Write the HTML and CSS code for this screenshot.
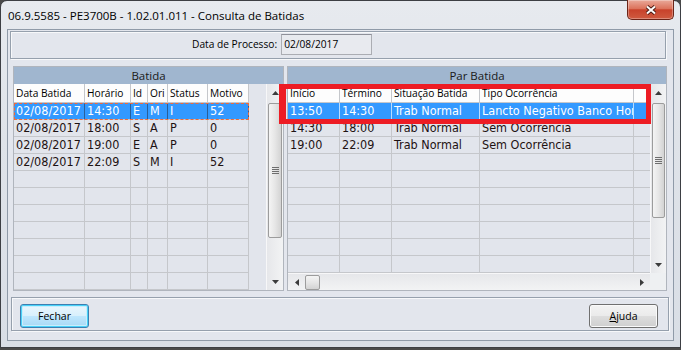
FILE: index.html
```html
<!DOCTYPE html>
<html lang="pt">
<head>
    <meta charset="UTF-8">
    <title>Consulta de Batidas</title>
    <link rel="stylesheet" href="styles.css">
</head>
<body>
    <div class="window">
        <div class="titlebar">
            <span class="title">06.9.5585 - PE3700B - 1.02.01.011 - Consulta de Batidas</span>
            <div class="close-btn">
                <svg width="12" height="10" viewBox="0 0 12 10">
                    <path d="M2 1.5 L10 8.5 M10 1.5 L2 8.5" stroke="#4a1a12" stroke-width="3.8"/>
                    <path d="M2 1.5 L10 8.5 M10 1.5 L2 8.5" stroke="#fff" stroke-width="2"/>
                </svg>
            </div>
        </div>

        <div class="client">
            <div class="panel top-panel">
                <span class="field-label">Data de Processo:</span>
                <div class="textbox">02/08/2017</div>
            </div>

            <div class="grids">
                <!-- batidas -->
                <div class="grid grid-left">
                    <div class="grid-caption">Batida</div>
                    <div class="grid-body">
                        <div class="cells cells-left">
                            <div class="row head">
                                <span class="c">Data Batida</span><span class="c">Horário</span><span class="c">Id</span><span class="c">Ori</span><span class="c">Status</span><span class="c">Motivo</span>
                            </div>
                            <div class="row selected">
                                <span class="c">02/08/2017</span><span class="c">14:30</span><span class="c">E</span><span class="c">M</span><span class="c">I</span><span class="c">52</span>
                            </div>
                            <div class="row">
                                <span class="c">02/08/2017</span><span class="c">18:00</span><span class="c">S</span><span class="c">A</span><span class="c">P</span><span class="c">0</span>
                            </div>
                            <div class="row">
                                <span class="c">02/08/2017</span><span class="c">19:00</span><span class="c">E</span><span class="c">A</span><span class="c">P</span><span class="c">0</span>
                            </div>
                            <div class="row">
                                <span class="c">02/08/2017</span><span class="c">22:09</span><span class="c">S</span><span class="c">M</span><span class="c">I</span><span class="c">52</span>
                            </div>
                            <div class="row"><span class="c"></span><span class="c"></span><span class="c"></span><span class="c"></span><span class="c"></span><span class="c"></span></div>
                            <div class="row"><span class="c"></span><span class="c"></span><span class="c"></span><span class="c"></span><span class="c"></span><span class="c"></span></div>
                            <div class="row"><span class="c"></span><span class="c"></span><span class="c"></span><span class="c"></span><span class="c"></span><span class="c"></span></div>
                            <div class="row"><span class="c"></span><span class="c"></span><span class="c"></span><span class="c"></span><span class="c"></span><span class="c"></span></div>
                            <div class="row"><span class="c"></span><span class="c"></span><span class="c"></span><span class="c"></span><span class="c"></span><span class="c"></span></div>
                            <div class="row"><span class="c"></span><span class="c"></span><span class="c"></span><span class="c"></span><span class="c"></span><span class="c"></span></div>
                            <div class="row"><span class="c"></span><span class="c"></span><span class="c"></span><span class="c"></span><span class="c"></span><span class="c"></span></div>
                        </div>
                        <div class="vscroll">
                            <div class="sb-arrow"><svg width="7" height="4" viewBox="0 0 7 4"><path d="M0 4 L3.5 0 L7 4 Z" fill="#3c3c3c"/></svg></div>
                            <div class="thumb-v thumb-left">
                                <svg width="7" height="8" viewBox="0 0 7 8"><path d="M0 0.5 H7 M0 2.5 H7 M0 4.5 H7 M0 6.5 H7" stroke="#6e6e6e" stroke-width="1"/></svg>
                            </div>
                            <div class="sb-arrow bottom"><svg width="7" height="4" viewBox="0 0 7 4"><path d="M0 0 L7 0 L3.5 4 Z" fill="#3c3c3c"/></svg></div>
                        </div>
                    </div>
                </div>

                <!-- pares -->
                <div class="grid grid-right">
                    <div class="grid-caption">Par Batida</div>
                    <div class="grid-body">
                        <div class="grid-main">
                            <div class="cells cells-right">
                                <div class="row head">
                                    <span class="c">Início</span><span class="c">Término</span><span class="c">Situação Batida</span><span class="c">Tipo Ocorrência</span><span class="c fill"></span>
                                </div>
                                <div class="row selected">
                                    <span class="c">13:50</span><span class="c">14:30</span><span class="c">Trab Normal</span><span class="c">Lancto Negativo Banco Horas</span><span class="c fill"></span>
                                </div>
                                <div class="row">
                                    <span class="c">14:30</span><span class="c">18:00</span><span class="c">Trab Normal</span><span class="c">Sem Ocorrência</span><span class="c fill"></span>
                                </div>
                                <div class="row">
                                    <span class="c">19:00</span><span class="c">22:09</span><span class="c">Trab Normal</span><span class="c">Sem Ocorrência</span><span class="c fill"></span>
                                </div>
                                <div class="row"><span class="c"></span><span class="c"></span><span class="c"></span><span class="c"></span><span class="c fill"></span></div>
                                <div class="row"><span class="c"></span><span class="c"></span><span class="c"></span><span class="c"></span><span class="c fill"></span></div>
                                <div class="row"><span class="c"></span><span class="c"></span><span class="c"></span><span class="c"></span><span class="c fill"></span></div>
                                <div class="row"><span class="c"></span><span class="c"></span><span class="c"></span><span class="c"></span><span class="c fill"></span></div>
                                <div class="row"><span class="c"></span><span class="c"></span><span class="c"></span><span class="c"></span><span class="c fill"></span></div>
                                <div class="row"><span class="c"></span><span class="c"></span><span class="c"></span><span class="c"></span><span class="c fill"></span></div>
                                <div class="row"><span class="c"></span><span class="c"></span><span class="c"></span><span class="c"></span><span class="c fill"></span></div>
                            </div>
                            <div class="hscroll">
                                <div class="sb-arrow-h"><svg width="4" height="7" viewBox="0 0 4 7"><path d="M4 0 L0 3.5 L4 7 Z" fill="#3c3c3c"/></svg></div>
                                <div class="thumb-h"></div>
                                <div class="sb-arrow-h end"><svg width="4" height="7" viewBox="0 0 4 7"><path d="M0 0 L4 3.5 L0 7 Z" fill="#3c3c3c"/></svg></div>
                            </div>
                        </div>
                        <div class="vcol">
                            <div class="vscroll narrow">
                                <div class="sb-arrow"><svg width="7" height="4" viewBox="0 0 7 4"><path d="M0 4 L3.5 0 L7 4 Z" fill="#3c3c3c"/></svg></div>
                                <div class="thumb-v thumb-right">
                                    <svg width="7" height="8" viewBox="0 0 7 8"><path d="M0 0.5 H7 M0 2.5 H7 M0 4.5 H7 M0 6.5 H7" stroke="#6e6e6e" stroke-width="1"/></svg>
                                </div>
                                <div class="sb-arrow bottom"><svg width="7" height="4" viewBox="0 0 7 4"><path d="M0 0 L7 0 L3.5 4 Z" fill="#3c3c3c"/></svg></div>
                            </div>
                            <div class="corner"></div>
                        </div>
                    </div>
                    <!-- marcação vermelha sobre a linha selecionada -->
                    <div class="highlight"></div>
                </div>
            </div>

            <div class="panel bottom-panel">
                <button class="btn btn-default">Fechar</button>
                <button class="btn"><u>A</u>juda</button>
            </div>
        </div>
    </div>
</body>
</html>
```

FILE: styles.css
```css
* {
    box-sizing: border-box;
}
body {
    margin: 0;
    background: #4a4a4a;
    font-family: "Open Sans", "DejaVu Sans", sans-serif;
}
.window {
    width: 681px;
    height: 348px;
    border: 1px solid #3d3f44;
    border-radius: 7px 7px 0 0;
    background: linear-gradient(180deg, #e7eaef 0%, #dfe3e9 40%, #d9dee6 100%);
    padding: 0 6px 6px 6px;
    display: flex;
    flex-direction: column;
}
.titlebar {
    height: 28px;
    flex-shrink: 0;
    display: flex;
    align-items: center;
}
.title {
    font-size: 11.5px;
    color: #000;
    padding-left: 1px;
    margin-top: 1px;
}
.close-btn {
    margin-left: auto;
    align-self: flex-start;
    margin-top: -1px;
    width: 47px;
    height: 20px;
    border: 1px solid #6b2418;
    border-top: none;
    border-radius: 0 0 5px 5px;
    background: linear-gradient(180deg, #e9a99a 0%, #dc735c 45%, #c8422b 52%, #cf5a40 100%);
    box-shadow: inset 0 0 0 1px rgba(255, 255, 255, 0.3);
    display: flex;
    align-items: center;
    justify-content: center;
}
.client {
    flex: 1;
    border: 1px solid #8f9aa8;
    background: #e3e6ed;
    display: flex;
    flex-direction: column;
}
.panel {
    border: 1px solid #96a0ad;
    box-shadow: 1px 1px 0 #f7f8fa, inset 1px 1px 0 #f7f8fa;
}
.top-panel {
    height: 28px;
    margin: 1px 7px 0 2px;
    display: flex;
    align-items: flex-start;
    gap: 4px;
    padding: 2px 0 0 181px;
}
.field-label {
    font-size: 10.2px;
    line-height: 21px;
    color: #000;
}
.textbox {
    width: 91px;
    height: 21px;
    border: 1px solid #abadb3;
    border-top-color: #8e9099;
    background: #e8eaef;
    font-size: 10.2px;
    line-height: 19px;
    padding-left: 2px;
    color: #000;
}
.grids {
    display: flex;
    gap: 3px;
    margin: 7px 6px 0 5px;
}
.grid {
    height: 225px;
    border: 1px solid #b0b5bd;
    background: #e2e5ec;
    display: flex;
    flex-direction: column;
}
.grid-left {
    width: 271px;
}
.grid-right {
    width: 380px;
    position: relative;
}
.grid-caption {
    height: 17px;
    flex-shrink: 0;
    background: #a0b6cf;
    text-align: center;
    font-size: 11.5px;
    line-height: 17px;
    color: #1a1a1a;
}
.grid-body {
    flex: 1;
    display: flex;
    overflow: hidden;
}
.cells {
    overflow: hidden;
    font-family: "DejaVu Sans Condensed", "DejaVu Sans", sans-serif;
    font-stretch: condensed;
    font-size: 12.5px;
    color: #1e1212;
}
.cells-left {
    width: 252px;
}
.row {
    display: grid;
    height: 17px;
}
.cells-left .row {
    width: 235px;
    grid-template-columns: 71px 46px 17px 20px 40px 41px;
}
.cells-right .row {
    grid-template-columns: 52px 52px 88px 154px 16px;
}
.c {
    border-right: 1px solid #c5c7cb;
    border-bottom: 1px solid #c5c7cb;
    padding-left: 2px;
    line-height: 16px;
    white-space: nowrap;
    overflow: hidden;
}
.c.fill {
    border-right: none;
}
.row.head {
    height: 19px;
}
.row.head .c {
    background: #fdfdfd;
    font-family: "Open Sans", "DejaVu Sans", sans-serif;
    font-stretch: normal;
    font-size: 10.2px;
    line-height: 18px;
    color: #000;
}
.row.selected .c {
    background: #3399ff;
    color: #fff;
}
.cells-left .row.selected {
    outline: 1px dashed #f06a3a;
    outline-offset: -1px;
}
.cells-left .row.selected .c {
    border-right-color: #2a5f99;
}
.cells-right .row.selected .c {
    border-right-color: #b9dcff;
}
.vscroll {
    width: 17px;
    background: linear-gradient(90deg, #e6e7ea, #f2f3f4);
    border-left: 1px solid #f7f7f8;
    display: flex;
    flex-direction: column;
    align-items: center;
}
.vscroll.narrow {
    width: 16px;
    flex: 1;
}
.sb-arrow {
    width: 100%;
    height: 17px;
    flex-shrink: 0;
    display: flex;
    align-items: center;
    justify-content: center;
}
.sb-arrow.bottom {
    margin-top: auto;
}
.thumb-v {
    margin-top: 2px;
    width: 14px;
    border: 1px solid #9c9c9c;
    border-radius: 2px;
    background: linear-gradient(90deg, #f4f4f4, #e6e6e6 50%, #d3d3d3);
    display: flex;
    align-items: center;
    justify-content: center;
}
.thumb-left {
    height: 135px;
}
.thumb-right {
    width: 13px;
    height: 115px;
}
.grid-main {
    width: 362px;
    display: flex;
    flex-direction: column;
}
.cells-right {
    flex: 1;
}
.hscroll {
    height: 17px;
    flex-shrink: 0;
    background: linear-gradient(180deg, #e6e7ea, #f2f3f4);
    border-top: 1px solid #f7f7f8;
    display: flex;
    align-items: center;
}
.sb-arrow-h {
    width: 17px;
    height: 16px;
    display: flex;
    align-items: center;
    justify-content: center;
}
.sb-arrow-h.end {
    margin-left: auto;
}
.thumb-h {
    width: 15px;
    height: 15px;
    border: 1px solid #9c9c9c;
    border-radius: 2px;
    background: linear-gradient(180deg, #f4f4f4, #e6e6e6 50%, #d3d3d3);
}
.vcol {
    width: 16px;
    display: flex;
    flex-direction: column;
}
.corner {
    height: 17px;
    background: #eef0f2;
}
.highlight {
    position: absolute;
    left: -9px;
    top: 17px;
    width: 372px;
    height: 40px;
    border: 5px solid #ed1c24;
    border-left-width: 7px;
}
.bottom-panel {
    height: 34px;
    margin: 6px 4px 0 3px;
    display: flex;
    justify-content: space-between;
    align-items: flex-start;
    padding: 6px 10px 0 8px;
}
.btn {
    width: 69px;
    height: 24px;
    border: 1px solid #707070;
    border-radius: 3px;
    background: linear-gradient(180deg, #f3f3f3 0%, #ebebeb 48%, #dddddd 52%, #cfcfcf 100%);
    box-shadow: inset 0 0 0 1px #fafafa;
    font-family: "Open Sans", "DejaVu Sans", sans-serif;
    font-size: 10.5px;
    color: #000;
    padding: 0;
}
.btn u {
    text-decoration-thickness: 1px;
}
.btn-default {
    border-color: #3c7fb1;
    background: linear-gradient(180deg, #eaf6fd 0%, #d9f0fc 48%, #bee6fd 52%, #a7d9f5 100%);
    box-shadow: inset 0 0 0 1px #48d1f8, inset 0 0 0 2px #c8eefc;
}
```
